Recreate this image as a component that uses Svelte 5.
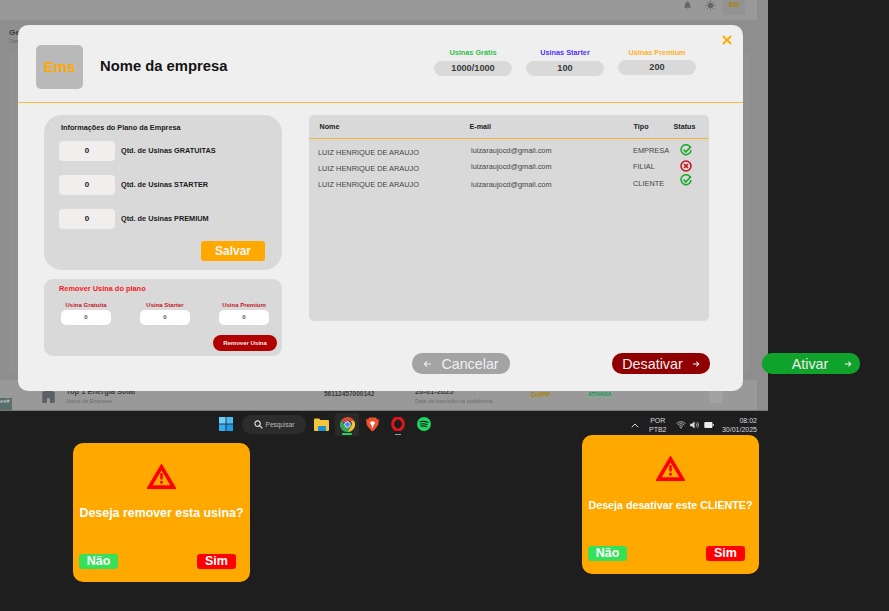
<script>
	const plans = [
		{ label: 'Usinas Grátis', value: '1000/1000', cls: 'green' },
		{ label: 'Usinas Starter', value: '100', cls: 'blue' },
		{ label: 'Usinas Premium', value: '200', cls: 'amber' }
	];
	const quantities = ['GRATUITAS', 'STARTER', 'PREMIUM'];
	const removals = ['Usina Gratuita', 'Usina Starter', 'Usina Premium'];
	const users = [
		{ tipo: 'EMPRESA', ok: true },
		{ tipo: 'FILIAL', ok: false },
		{ tipo: 'CLIENTE', ok: true }
	];
	const alerts = [
		{ cls: 'alert-remove', text: 'Deseja remover esta usina?' },
		{ cls: 'alert-disable', text: 'Deseja desativar este CLIENTE?' }
	];
</script>

<div class="board">
	<!-- screenshot of the dashboard underneath, dimmed -->
	<div class="screen">
		<div class="topbar">
			<svg class="bell" viewBox="0 0 10 10" width="9" height="9"><path d="M5 0.5a1 1 0 0 1 1 1c1.5.5 1.8 2 1.8 3.500l1 2.500H1.200l1-2.500c0-1.500.3-3 1.800-3.500a1 1 0 0 1 1-1zM4 8.500h2l-1 1z" fill="#666" /></svg>
			<svg class="sun" viewBox="0 0 12 12" width="11" height="11"><circle cx="6" cy="6" r="3" fill="#666" /><path d="M6 .5v2M6 9.500v2M.5 6h2M9.500 6h2M2 2l1.400 1.400M8.600 8.600L10 10M2 10l1.400-1.400M8.600 3.400L10 2" stroke="#666" stroke-width="1" /></svg>
			<span class="em">EM</span>
		</div>
		<div class="crumb">
			<strong>Ge</strong>
			<small>Das</small>
		</div>
		<div class="panel"></div>
		<div class="dim-row">
			<svg class="house" viewBox="0 0 18 18" width="17" height="14"><path d="M1 4l8-3 8 3v14h-6v-6H7v6H1z" fill="#5b6068" /></svg>
			<div class="company">
				<strong>Top 1 Energia Solar</strong>
				<small>Nome da Empresa</small>
			</div>
			<div class="cnpj">56112457000142</div>
			<div class="since">
				<strong>20-01-2025</strong>
				<small>Data de inscrição na plataforma</small>
			</div>
			<span class="ddpf">DdPF</span>
			<span class="state">ATIVADA</span>
			<span class="round"></span>
		</div>
		<span class="tag">es#</span>
	</div>

	<div class="taskbar">
		<svg class="tb-win" viewBox="0 0 14 14" width="14" height="14">
			<rect width="6.600" height="6.600" fill="#6fd0f7" />
			<rect x="7.400" width="6.600" height="6.600" fill="#4cbcf2" />
			<rect y="7.400" width="6.600" height="6.600" fill="#37abed" />
			<rect x="7.400" y="7.400" width="6.600" height="6.600" fill="#1f9be6" />
		</svg>
		<div class="tb-search">
			<svg viewBox="0 0 10 10" width="9" height="9"><circle cx="4" cy="4" r="3" fill="none" stroke="#e8e8e8" stroke-width="1.200" /><path d="M6.200 6.200L9.300 9.300" stroke="#e8e8e8" stroke-width="1.300" /></svg>
			Pesquisar
		</div>
		<svg class="tb-folder" viewBox="0 0 15 13" width="15" height="13">
			<path d="M0 1.500A1 1 0 0 1 1 .5h4l1.500 1.500H14a1 1 0 0 1 1 1v9a1 1 0 0 1-1 1H1a1 1 0 0 1-1-1z" fill="#f3c53f" />
			<rect x="4" y="8" width="8" height="5" fill="#1f8fd6" />
		</svg>
		<div class="tb-active">
			<svg viewBox="0 0 14 14" width="15" height="15">
				<path d="M7 0a7 7 0 0 1 6.100 3.500H7A3.500 3.500 0 0 0 3.700 6L1.600 2.500A7 7 0 0 1 7 0z" fill="#e2453a" />
				<path d="M13.100 3.500A7 7 0 0 1 7 14l3-5.200a3.500 3.500 0 0 0-.4-5.300z" fill="#f4c430" />
				<path d="M1.600 2.500L4.500 8.500A3.500 3.500 0 0 0 10 8.800L7 14A7 7 0 0 1 1.600 2.500z" fill="#34a853" />
				<circle cx="7" cy="7" r="2.700" fill="#4a8af4" stroke="#fff" stroke-width=".8" />
			</svg>
			<i></i>
		</div>
		<svg class="tb-brave" viewBox="0 0 14 15" width="13" height="15">
			<path d="M3.500 0h7l1.500 2 2-.3-.8 6.300L9.500 13 7 15l-2.500-2L.8 8 0 1.700 2 2z" fill="#f0502a" />
			<path d="M4 5l3-1 3 1-2 3.500L7 12 6 8.500z" fill="#fff" />
		</svg>
		<div class="tb-opera">
			<svg viewBox="0 0 14 14" width="14" height="14"><ellipse cx="7" cy="7" rx="5.300" ry="6" fill="none" stroke="#e3141e" stroke-width="3" /></svg>
			<i></i>
		</div>
		<svg class="tb-spotify" viewBox="0 0 14 14" width="14" height="14">
			<circle cx="7" cy="7" r="7" fill="#1ed760" />
			<path d="M3 4.800c2.800-.8 5.500-.5 8 .8M3.500 7c2.400-.6 4.600-.4 6.800.7M4 9.100c2-.5 3.800-.3 5.500.6" fill="none" stroke="#1b1b1b" stroke-width="1.100" stroke-linecap="round" />
		</svg>

		<div class="tray">
			<svg class="chev" viewBox="0 0 8 5" width="8" height="5"><path d="M.7 4.300L4 1l3.300 3.300" fill="none" stroke="#ddd" stroke-width="1" /></svg>
			<div class="lang">POR<br />PTB2</div>
			<svg viewBox="0 0 11 8" width="10" height="8"><path d="M.5 2.500a7 7 0 0 1 10 0M2 4a5 5 0 0 1 7 0M3.500 5.500a3 3 0 0 1 4 0" fill="none" stroke="#ddd" stroke-width=".8" /><circle cx="5.500" cy="7" r=".8" fill="#ddd" /></svg>
			<svg viewBox="0 0 11 9" width="10" height="8"><path d="M0 3h2l3-2.500v8L2 6H0z" fill="#ddd" /><path d="M6.500 2.500a2.500 2.500 0 0 1 0 4M8 1.200a4.500 4.500 0 0 1 0 6.600" fill="none" stroke="#ddd" stroke-width=".8" /></svg>
			<svg viewBox="0 0 11 7" width="10" height="6"><rect width="9.500" height="7" rx="1.200" fill="#eee" /><rect x="9.800" y="2.300" width="1.200" height="2.400" fill="#eee" /></svg>
			<div class="clock">08:02<br />30/01/2025</div>
		</div>
	</div>

	<!-- main modal -->
	<div class="modal">
		<header>
			<div class="logo">Ems</div>
			<h1>Nome da empresa</h1>
			<div class="plans">
				{#each plans as plan}
					<div class="plan {plan.cls}">
						<span>{plan.label}</span>
						<b>{plan.value}</b>
					</div>
				{/each}
			</div>
			<svg class="close" viewBox="0 0 10 10" width="10" height="10"><path d="M1 1l8 8M9 1l-8 8" stroke="#ffa800" stroke-width="1.900" /></svg>
		</header>

		<div class="body">
			<div class="side">
				<section class="info">
					<h2>Informações do Plano da Empresa</h2>
					{#each quantities as q}
						<div class="qty">
							<div class="qty-box">0</div>
							<span>Qtd. de Usinas {q}</span>
						</div>
					{/each}
					<button class="save">Salvar</button>
				</section>
				<section class="remove">
					<h3>Remover Usina do plano</h3>
					<div class="remove-grid">
						{#each removals as r}
							<div class="remove-col">
								<span>{r}</span>
								<div class="remove-box">0</div>
							</div>
						{/each}
					</div>
					<button class="remove-btn">Remover Usina</button>
				</section>
			</div>

			<section class="table">
				<div class="thead">
					<span>Nome</span>
					<span>E-mail</span>
					<span>Tipo</span>
					<span>Status</span>
				</div>
				{#each users as u, i}
					<div class="row r{i}">
						<span class="name">LUIZ HENRIQUE DE ARAUJO</span>
						<span class="mail">luizaraujocd@gmail.com</span>
						<span class="tipo">{u.tipo}</span>
						<span class="status">
							{#if u.ok}
								<svg viewBox="0 0 12 12" width="12" height="12"><path d="M10.500 3.500A5 5 0 1 0 11 6" fill="none" stroke="#17ac2d" stroke-width="1.500" /><path d="M3.500 5.500L5.800 8 11 2.500" fill="none" stroke="#17ac2d" stroke-width="1.700" /></svg>
							{:else}
								<svg viewBox="0 0 12 12" width="12" height="12"><circle cx="6" cy="6" r="5" fill="none" stroke="#c8101c" stroke-width="1.500" /><path d="M4 4l4 4M8 4l-4 4" stroke="#c8101c" stroke-width="1.600" /></svg>
							{/if}
						</span>
					</div>
				{/each}
			</section>
		</div>

		<footer>
			<button class="pill cancel">
				<svg viewBox="0 0 10 8" width="9" height="8"><path d="M9 4H1.500M4.500 1L1.500 4l3 3" fill="none" stroke="#eee" stroke-width="1.300" /></svg>
				Cancelar
			</button>
			<button class="pill deactivate">
				Desativar
				<svg viewBox="0 0 10 8" width="8" height="8"><path d="M1 4h7.500M5.500 1l3 3-3 3" fill="none" stroke="#eee" stroke-width="1.300" /></svg>
			</button>
		</footer>
	</div>

	<button class="pill activate">
		Ativar
		<svg viewBox="0 0 10 8" width="8" height="8"><path d="M1 4h7.500M5.500 1l3 3-3 3" fill="none" stroke="#eee" stroke-width="1.300" /></svg>
	</button>

	{#each alerts as a}
		<div class="alert {a.cls}">
			<svg viewBox="0 0 30 26" width="29" height="25">
				<path d="M15 3L27.500 24h-25z" fill="none" stroke="#fe0000" stroke-width="3.800" />
				<path d="M15 9.500v6.500" stroke="#fe0000" stroke-width="2.600" />
				<circle cx="15" cy="19" r="1.500" fill="#fe0000" />
			</svg>
			<p>{a.text}</p>
			<div class="answers">
				<button class="no">Não</button>
				<button class="yes">Sim</button>
			</div>
		</div>
	{/each}
</div>

<style>
	:global(body) {
		margin: 0;
		background: #1e1e1e;
	}

	.board {
		position: relative;
		width: 889px;
		height: 611px;
		overflow: hidden;
		background: #1e1e1e;
		font-family: 'Liberation Sans', Arial, sans-serif;
	}

	button {
		font-family: inherit;
		border: none;
		padding: 0;
	}

	/* dimmed dashboard */
	.screen {
		position: absolute;
		left: 0;
		top: 0;
		width: 768px;
		height: 411px;
		background: #8e8e8e;
		border-bottom: 1px solid #777;
		box-sizing: border-box;
		color: #3c3c3c;
	}

	.topbar {
		height: 20px;
		width: 757px;
		background: #999;
		display: flex;
		justify-content: flex-end;
		align-items: flex-start;
	}

	.bell {
		margin: 1px 13px 0 0;
	}

	.sun {
		margin: 0 7px 0 0;
	}

	.em {
		width: 22px;
		height: 15px;
		background: #939393;
		color: #a8820e;
		font-size: 7px;
		font-weight: bold;
		text-align: center;
		line-height: 10px;
		margin-right: 12px;
	}

	.crumb {
		position: absolute;
		left: 9px;
		top: 28px;
		display: flex;
		flex-direction: column;
		font-size: 8px;
	}

	.crumb small {
		font-size: 5.500px;
		color: #6a6a6a;
		margin-top: 1px;
	}

	.panel {
		position: absolute;
		left: 9px;
		top: 53px;
		width: 740px;
		height: 320px;
		background: #919191;
	}

	.dim-row {
		position: absolute;
		left: 0;
		top: 380px;
		width: 757px;
		height: 30px;
		background: #999;
		font-size: 7.500px;
	}

	.dim-row > * {
		position: absolute;
	}

	.dim-row small {
		display: block;
		font-size: 5.500px;
		color: #6d6d6d;
		margin-top: 2px;
	}

	.house {
		left: 40px;
		top: 9px;
	}

	.company {
		left: 66px;
		top: 7px;
	}

	.cnpj {
		left: 324px;
		top: 10px;
		font-size: 6.500px;
		font-weight: bold;
	}

	.since {
		left: 415px;
		top: 7px;
	}

	.ddpf {
		left: 531px;
		top: 10px;
		color: #a8860a;
		font-size: 7.500px;
		font-weight: bold;
	}

	.state {
		left: 586px;
		top: 10px;
		padding: 1px 2px;
		background: #8aa597;
		color: #2f8a55;
		font-size: 5.500px;
		font-weight: bold;
	}

	.round {
		left: 709px;
		top: 7px;
		width: 14px;
		height: 16px;
		background: #a2a2a2;
		border-radius: 3px;
	}

	.tag {
		position: absolute;
		left: 0;
		top: 398px;
		width: 12px;
		height: 12px;
		background: #5a6e6e;
		color: #ccc;
		font-size: 6px;
	}

	/* windows taskbar */
	.taskbar > * {
		position: absolute;
	}

	.tb-win {
		left: 219px;
		top: 417px;
	}

	.tb-search {
		left: 242px;
		top: 415px;
		width: 64px;
		height: 19px;
		border-radius: 10px;
		background: #2c2c2c;
		color: #bdbdbd;
		font-size: 6.500px;
		display: flex;
		align-items: center;
		justify-content: center;
		gap: 3px;
	}

	.tb-folder {
		left: 314px;
		top: 418px;
	}

	.tb-active {
		left: 335px;
		top: 413px;
		width: 24px;
		height: 23px;
		background: #2a2a2a;
		border-radius: 3px;
		display: flex;
		justify-content: center;
		padding-top: 4px;
		box-sizing: border-box;
	}

	.tb-active i {
		position: absolute;
		left: 7px;
		bottom: 1px;
		width: 10px;
		height: 2px;
		border-radius: 1px;
		background: #1ed760;
	}

	.tb-brave {
		left: 366px;
		top: 417px;
	}

	.tb-opera {
		left: 391px;
		top: 417px;
	}

	.tb-opera i {
		position: absolute;
		left: 4px;
		top: 17px;
		width: 6px;
		height: 1px;
		background: #999;
	}

	.tb-spotify {
		left: 417px;
		top: 417px;
	}

	.tray {
		left: 631px;
		top: 412px;
		width: 126px;
		height: 26px;
		display: flex;
		align-items: center;
		color: #d8d8d8;
		font-size: 7px;
		line-height: 9px;
		text-align: center;
	}

	.chev {
		margin-right: 10px;
	}

	.lang {
		margin-right: 9px;
	}

	.tray svg + svg {
		margin-left: 4px;
	}

	.clock {
		margin-left: auto;
		text-align: right;
	}

	/* modal */
	.modal {
		position: absolute;
		left: 18px;
		top: 25px;
		width: 725px;
		height: 366px;
		border-radius: 10px;
		background: #efefef;
		display: flex;
		flex-direction: column;
		box-sizing: border-box;
	}

	header {
		position: relative;
		height: 78px;
		flex: none;
		border-bottom: 1px solid #fdba3f;
		box-sizing: border-box;
		display: flex;
		align-items: center;
		padding: 6px 47px 0 18px;
	}

	.logo {
		width: 47px;
		height: 44px;
		border-radius: 5px;
		background: #b9b9b9;
		color: #ffa800;
		font-size: 15px;
		font-weight: bold;
		display: flex;
		align-items: center;
		justify-content: center;
	}

	h1 {
		margin: 0 0 2px 17px;
		font-size: 14.800px;
		color: #141414;
	}

	.plans {
		margin-left: auto;
		display: flex;
		gap: 14px;
		margin-top: -9px;
	}

	.plan {
		width: 78px;
		display: flex;
		flex-direction: column;
		align-items: center;
		gap: 4px;
		font-size: 7.300px;
		font-weight: bold;
	}

	.plan b {
		width: 100%;
		height: 15px;
		line-height: 15px;
		border-radius: 8px;
		background: #d9d9d9;
		color: #3a3a3a;
		font-size: 9.200px;
		text-align: center;
	}

	.plan.amber b {
		margin-top: -1px;
	}

	.green {
		color: #31c04b;
	}

	.blue {
		color: #5530ff;
	}

	.amber {
		color: #ffb01f;
	}

	.close {
		position: absolute;
		right: 11px;
		top: 10px;
	}

	.body {
		height: 250px;
		flex: none;
		box-sizing: border-box;
		display: flex;
		gap: 27px;
		padding: 12px 34px 0 26px;
	}

	.side {
		width: 238px;
		display: flex;
		flex-direction: column;
		gap: 9px;
	}

	.info {
		height: 155px;
		flex: none;
		box-sizing: border-box;
		border-radius: 18px;
		background: #d9d9d9;
		padding: 8px 17px 0 15px;
		display: flex;
		flex-direction: column;
	}

	h2 {
		margin: 0 0 9px 2px;
		font-size: 7.300px;
		color: #1a1a1a;
	}

	.qty {
		display: flex;
		align-items: center;
		gap: 6px;
		height: 20px;
		margin-bottom: 14px;
		font-size: 7.300px;
		font-weight: bold;
		color: #1a1a1a;
	}

	.qty span {
		margin-bottom: 1px;
	}

	.qty-box {
		width: 56px;
		height: 20px;
		border-radius: 4px;
		background: #f0efee;
		font-size: 8px;
		text-align: center;
		line-height: 20px;
	}

	.save {
		align-self: flex-end;
		margin-top: -2px;
		width: 64px;
		height: 20px;
		border-radius: 3px;
		background: #ffa800;
		color: #f6f6f6;
		font-size: 12px;
		font-weight: bold;
	}

	.remove {
		height: 77px;
		flex: none;
		box-sizing: border-box;
		border-radius: 9px;
		background: #d9d9d9;
		padding: 5px 5px 0 15px;
		display: flex;
		flex-direction: column;
	}

	h3 {
		margin: 0 0 9px;
		font-size: 7.400px;
		color: #f5191d;
	}

	.remove-grid {
		display: flex;
		gap: 29px;
		margin-left: 2px;
	}

	.remove-col {
		width: 50px;
		display: flex;
		flex-direction: column;
		align-items: center;
		gap: 2px;
		color: #c5182a;
		font-size: 6px;
		font-weight: bold;
		white-space: nowrap;
	}

	.remove-box {
		width: 50px;
		height: 15px;
		line-height: 15px;
		border-radius: 5px;
		background: #fff;
		color: #555;
		text-align: center;
	}

	.remove-btn {
		align-self: flex-end;
		margin-top: 10px;
		width: 64px;
		height: 16px;
		border-radius: 8px;
		background: #b10000;
		color: #eee;
		font-size: 6px;
		font-weight: bold;
	}

	.table {
		width: 400px;
		height: 206px;
		flex: none;
		border-radius: 5px;
		background: #d9d9d9;
	}

	.thead {
		display: grid;
		grid-template-columns: 150px 164px 40px auto;
		padding: 0 0 0 10.500px;
		height: 24px;
		line-height: 24px;
		border-bottom: 1px solid #f5b43d;
		box-sizing: border-box;
		font-size: 7.200px;
		font-weight: bold;
		color: #222;
		margin-bottom: 3px;
	}

	.row {
		display: grid;
		grid-template-columns: 153px 163px 40px auto;
		padding-left: 8px;
		height: 16px;
		font-size: 7.400px;
		color: #444;
		align-items: center;
	}

	.row .name {
		padding: 5px 0 0 1px;
	}

	.row .mail {
		padding-left: 1px;
		padding-top: 1px;
	}

	.r2 .mail {
		padding-top: 4px;
	}

	.r2 .tipo {
		padding-top: 2px;
	}

	.status {
		display: flex;
		justify-content: center;
		margin-left: -7px;
		width: 40px;
	}

	.r2 .status {
		margin-top: -4px;
	}

	footer {
		height: 21px;
		flex: none;
		display: flex;
		justify-content: space-between;
		padding: 0 33px 0 394px;
		box-sizing: border-box;
	}

	.pill {
		width: 98px;
		height: 21px;
		border-radius: 10px;
		font-size: 14.300px;
		color: #efefef;
		display: flex;
		align-items: center;
		justify-content: center;
		gap: 9px;
	}

	.cancel {
		background: #a3a3a3;
	}

	.deactivate {
		background: #900000;
	}

	.activate {
		position: absolute;
		left: 762px;
		top: 353px;
		background: #10a32b;
		padding-left: 22px;
		gap: 16px;
	}

	/* confirmation cards */
	.alert {
		position: absolute;
		width: 177px;
		height: 139px;
		box-sizing: border-box;
		border-radius: 10px;
		background: #ffa800;
		display: flex;
		flex-direction: column;
		align-items: center;
		padding-top: 21px;
	}

	.alert-remove {
		left: 73px;
		top: 443px;
	}

	.alert-disable {
		left: 582px;
		top: 435px;
	}

	.alert p {
		margin: 17px 0 0;
		color: #fff;
		font-weight: bold;
		font-size: 12.400px;
		white-space: nowrap;
	}

	.alert-disable p {
		margin-top: 18px;
		font-size: 10.700px;
	}

	.answers {
		margin-top: auto;
		margin-bottom: 13px;
		width: 100%;
		box-sizing: border-box;
		padding: 0 14px 0 6px;
		display: flex;
		justify-content: space-between;
	}

	.answers button {
		width: 39px;
		height: 15px;
		border-radius: 3px;
		color: #fff;
		font-size: 12.500px;
		font-weight: bold;
		line-height: 15px;
	}

	.no {
		background: #35e159;
	}

	.yes {
		background: #fe0000;
	}
</style>
